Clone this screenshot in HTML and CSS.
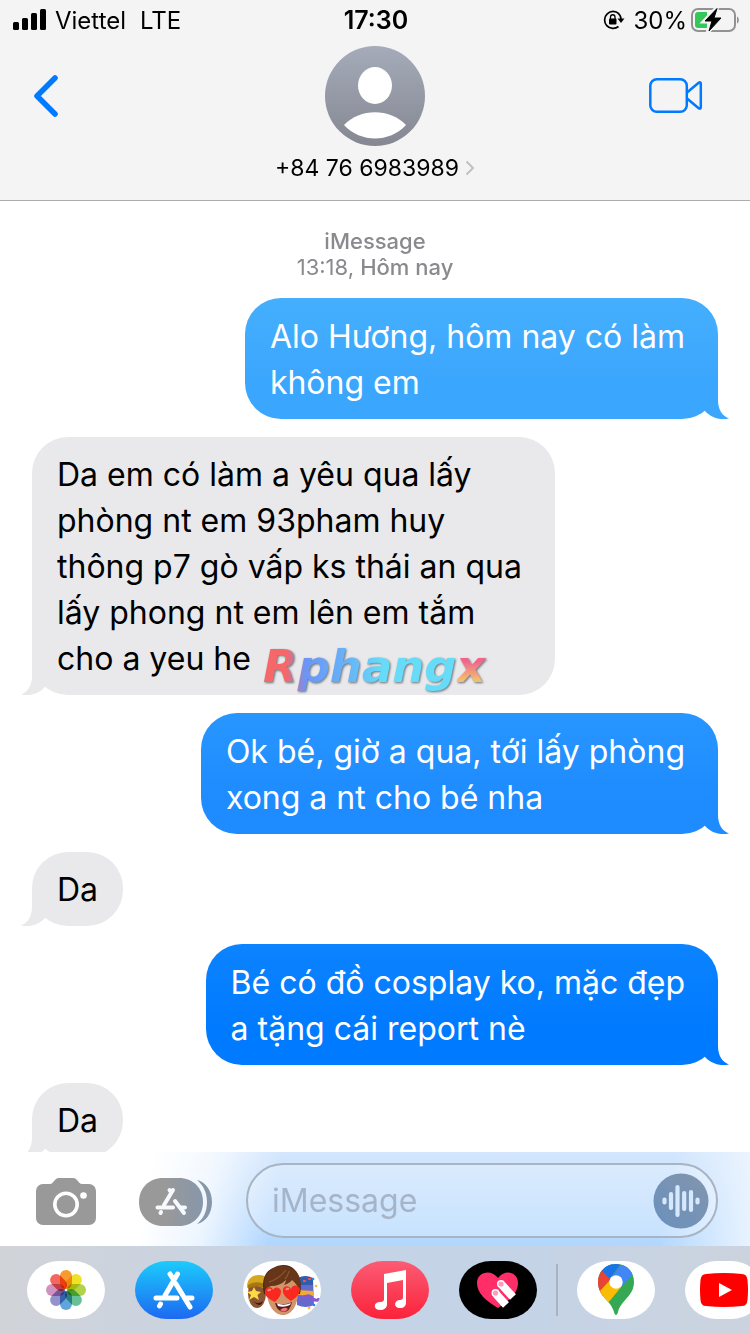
FILE: index.html
```html
<!DOCTYPE html>
<html lang="vi">
<head>
    <meta charset="UTF-8">
    <meta name="viewport" content="width=device-width, initial-scale=1.0">
    <title>iMessage</title>
    <link rel="stylesheet" href="styles.css">
</head>
<body>

<svg class="defs" width="0" height="0" aria-hidden="true">
    <symbol id="tail-right" viewBox="0 0 30 36">
        <path d="M18 0V17C18 26 22 33 29 35.500C20 37.500 11 34.500 5 28L0 16Z"/>
    </symbol>
    <symbol id="tail-left" viewBox="0 0 30 36">
        <path d="M12 0V17C12 26 8 33 1 35.500C10 37.500 19 34.500 25 28L30 16Z"/>
    </symbol>
</svg>

<header class="header">
    <div class="status-bar">
        <div class="status-left">
            <svg width="34" height="22" viewBox="0 0 34 22">
                <rect x="0" y="13" width="6" height="8" rx="1.500"/>
                <rect x="9" y="9" width="6" height="12" rx="1.500"/>
                <rect x="18" y="4" width="6" height="17" rx="1.500"/>
                <rect x="27" y="0" width="6" height="21" rx="1.500"/>
            </svg>
            <span>Viettel</span>
            <span class="network">LTE</span>
        </div>
        <div class="clock">17:30</div>
        <div class="status-right">
            <svg width="22" height="20" viewBox="0 0 22 20">
                <path d="M16 3.800A8.500 8.500 0 1 0 15.500 16.500M14.800 2.800A8.500 8.500 0 0 1 18 9" fill="none" stroke="#000" stroke-width="1.700"/>
                <path d="M14.500 8.500H21.500L18 13Z"/>
                <rect x="6" y="8.500" width="7.500" height="6" rx="1"/>
                <path d="M7.500 9V7A2.200 2.200 0 0 1 12 7V9" fill="none" stroke="#000" stroke-width="1.300"/>
            </svg>
            <span class="percent">30%</span>
            <svg width="50" height="26" viewBox="0 0 50 26">
                <rect x="3" y="2" width="43" height="22" rx="6" fill="none" stroke="#929292" stroke-width="2"/>
                <path d="M48 9.500C50.500 10.500 50.500 15.500 48 16.500Z" fill="#929292"/>
                <path d="M9 5H18V21H9A3 3 0 0 1 6 18V8A3 3 0 0 1 9 5Z" fill="#34c759"/>
                <path d="M28 0.500L15 14.500H22L19 24.500L33 11H25.500Z" stroke="#f4f4f4" stroke-width="4"/>
                <path d="M28 1.500L16 14H23L20 24L32 11H25Z" stroke="#000" stroke-width="1" stroke-linejoin="round"/>
            </svg>
        </div>
    </div>
    <div class="nav">
        <button class="nav-btn" type="button" aria-label="Back">
            <svg width="28" height="44" viewBox="0 0 28 44">
                <path d="M23 4L5 22L23 40" fill="none" stroke="#007aff" stroke-width="5.500" stroke-linecap="round" stroke-linejoin="round"/>
            </svg>
        </button>
        <button class="contact" type="button">
            <svg width="100" height="100" viewBox="0 0 100 100">
                <defs>
                    <linearGradient id="avatar" x1="0" y1="0" x2="0" y2="1">
                        <stop offset="0" stop-color="#a5abb9"/>
                        <stop offset="1" stop-color="#858892"/>
                    </linearGradient>
                </defs>
                <circle cx="50" cy="50" r="50" fill="url(#avatar)"/>
                <ellipse cx="50" cy="39.500" rx="17" ry="18.500" fill="#fff"/>
                <path d="M19 79C35 62 65 62 81 79C64 97 36 97 19 79Z" fill="#fff"/>
            </svg>
            <span class="contact-name">+84 76 6983989
                <svg width="10" height="16" viewBox="0 0 10 16">
                    <path d="M1.500 1.500L8 8L1.500 14.500" fill="none" stroke="#c0c0c3" stroke-width="2"/>
                </svg>
            </span>
        </button>
        <button class="nav-btn nav-video" type="button" aria-label="FaceTime">
            <svg width="54" height="36" viewBox="0 0 54 36">
                <g fill="none" stroke="#007aff" stroke-width="2.500" stroke-linejoin="round">
                    <rect x="1.300" y="1.300" width="36.500" height="32.500" rx="6.500"/>
                    <path d="M38 14.500L50 4.500Q51.800 3.500 51.800 6V29Q51.800 31.500 50 30.500L38 20.500"/>
                </g>
            </svg>
        </button>
    </div>
</header>

<main class="messages">
    <p class="date"><b>iMessage</b><br>13:18, <b>Hôm nay</b></p>

    <div class="bubble sent long sent-1">Alo Hương, hôm nay có làm<br>không em
        <svg class="tail"><use href="#tail-right"/></svg>
    </div>
    <div class="bubble received long">Da em có làm a yêu qua lấy<br>phòng nt em 93pham huy<br>thông p7 gò vấp ks thái an qua<br>lấy phong nt em lên em tắm<br>cho a yeu he
        <span class="watermark"><span class="watermark-main">Rphang</span><span class="watermark-x">x</span></span>
        <svg class="tail"><use href="#tail-left"/></svg>
    </div>
    <div class="bubble sent long sent-2">Ok bé, giờ a qua, tới lấy phòng<br>xong a nt cho bé nha
        <svg class="tail"><use href="#tail-right"/></svg>
    </div>
    <div class="bubble received">Da
        <svg class="tail"><use href="#tail-left"/></svg>
    </div>
    <div class="bubble sent long sent-3">Bé có đồ cosplay ko, mặc đẹp<br>a tặng cái report nè
        <svg class="tail"><use href="#tail-right"/></svg>
    </div>
    <div class="bubble received">Da
        <svg class="tail"><use href="#tail-left"/></svg>
    </div>
</main>

<form class="composer">
    <button class="icon-btn" type="button" aria-label="Camera">
        <svg width="60" height="48" viewBox="0 0 60 48">
            <path d="M7 6H14C18 6 18 0 23 0H37C42 0 42 6 46 6H53A7 7 0 0 1 60 13V40A7 7 0 0 1 53 47H7A7 7 0 0 1 0 40V13A7 7 0 0 1 7 6Z" fill="#999"/>
            <circle cx="30" cy="26.500" r="11.200" fill="none" stroke="#fff" stroke-width="3.600"/>
            <circle cx="47.500" cy="17.500" r="3.300" fill="#fff"/>
        </svg>
    </button>
    <button class="icon-btn icon-apps" type="button" aria-label="Apps">
        <svg width="74" height="48" viewBox="0 0 74 48">
            <defs>
                <linearGradient id="drawer" x1="0" y1="0" x2="1" y2="0">
                    <stop offset="0.400" stop-color="#999"/>
                    <stop offset="1" stop-color="#8797aa"/>
                </linearGradient>
            </defs>
            <path d="M58 2C67 4 73 13 73 24S67 44 58 46C64 41 68 34 68 24S64 7 58 2Z" fill="#8797aa"/>
            <path d="M24 0H40C54 0 64 10 64 24S54 48 40 48H24C10 48 0 38 0 24S10 0 24 0Z" fill="url(#drawer)"/>
            <g stroke="#f6f9fe" stroke-width="4" stroke-linecap="round">
                <path d="M34 12L25 27M30.500 12L32 14M36 23L45 35M18.500 29.500H34M41.500 29.500H46M22 34L21.500 35"/>
            </g>
        </svg>
    </button>
    <div class="field">
        <input type="text" placeholder="iMessage" aria-label="iMessage">
        <button class="voice" type="button" aria-label="Audio message">
            <svg width="56" height="56" viewBox="0 0 56 56">
                <defs>
                    <linearGradient id="voice" x1="1" y1="0" x2="0" y2="1">
                        <stop offset="0" stop-color="#8395ad"/>
                        <stop offset="1" stop-color="#6a90bd"/>
                    </linearGradient>
                </defs>
                <circle cx="28" cy="28" r="27.500" fill="url(#voice)"/>
                <path d="M11.500 26.500V29.500M18 21V35M24.500 14V42M31.200 20V36M38 19V37M44.500 26.500V29.500" stroke="#d6e8fd" stroke-width="4.200" stroke-linecap="round"/>
            </svg>
        </button>
    </div>
</form>

<nav class="apps">
    <button class="app" type="button" aria-label="Photos">
        <svg width="42" height="42" viewBox="-21 -21 42 42">
            <g class="petals">
                <rect x="-6" y="-20" width="12" height="19" rx="6" fill="#f89b2e"/>
                <rect x="-6" y="-20" width="12" height="19" rx="6" fill="#f0e126" transform="rotate(45)"/>
                <rect x="-6" y="-20" width="12" height="19" rx="6" fill="#b1d34b" transform="rotate(90)"/>
                <rect x="-6" y="-20" width="12" height="19" rx="6" fill="#68c196" transform="rotate(135)"/>
                <rect x="-6" y="-20" width="12" height="19" rx="6" fill="#60a5dc" transform="rotate(180)"/>
                <rect x="-6" y="-20" width="12" height="19" rx="6" fill="#9392cb" transform="rotate(225)"/>
                <rect x="-6" y="-20" width="12" height="19" rx="6" fill="#cf93bf" transform="rotate(270)"/>
                <rect x="-6" y="-20" width="12" height="19" rx="6" fill="#f2685f" transform="rotate(315)"/>
            </g>
        </svg>
    </button>
    <button class="app app-store" type="button" aria-label="App Store">
        <svg width="44" height="40" viewBox="0 0 44 40">
            <path d="M25.500 4L13 25.500M18 4L20.500 8M24 14L38 37M4 28H25M35 28H40M8.500 34L7.500 36" stroke="#fff" stroke-width="5" stroke-linecap="round"/>
        </svg>
    </button>
    <button class="app" type="button" aria-label="Memoji">
        <svg width="78" height="58" viewBox="0 0 78 58">
            <ellipse cx="14" cy="33" rx="9" ry="14" fill="#8a5533"/>
            <path d="M4 26C4 16 12 12 22 15V28Q12 22 4 27Z" fill="#d6a720"/>
            <path d="M5 24Q13 19 22 23V27Q12 23 5 28Z" fill="#a9780e"/>
            <path d="M11 26L13 30L18 31L14.500 34L16 39L11 36L6 39L8 34L4 31L9 30Z" fill="#ffda43"/>
            <path d="M10 40Q15 44 20 40Q17 48 10 40Z" fill="#45170f"/>
            <path d="M54 18Q62 13 70 18L71 44Q63 48 54 44Z" fill="#6568cf"/>
            <path d="M55 17Q62 13 70 17V24H55Z" fill="#315daa"/>
            <path d="M55 29L71 30V35L55 34Z" fill="#f0ad31"/>
            <path d="M59 37Q67 32 69 38Q76 41 76 37" fill="none" stroke="#8659cc" stroke-width="3"/>
            <path d="M65 18H68M60 20H63" stroke="#f04c59" stroke-width="2"/>
            <g fill="#2584f5"><circle cx="70" cy="18" r="1.300"/><circle cx="71" cy="44" r="1.300"/></g>
            <g fill="#f4bd32"><circle cx="73" cy="25" r="1.300"/><circle cx="66" cy="47" r="1.300"/></g>
            <path d="M21 33C18 20 22 10 30 7C37 3 46 3 51 8C57 13 59 24 57 33Z" fill="#4d2612"/>
            <path d="M24 30C24 20 30 15 40 15S55 20 55 30C55 44 49 54 40 54S24 44 24 30Z" fill="#d2946a"/>
            <path d="M22 30C19 17 25 9 33 6C43 3 52 7 56 15C58 20 58 26 56 29Q54 23 49 19Q47 22 41 24Q43 21 43 19Q37 25 28 25Q24 26 22 30Z" fill="#673619"/>
            <path d="M26 21Q36 18 43 9M42 18Q45 15 46 10" fill="none" stroke="#8f5530" stroke-width="1.200"/>
            <path d="M32 42Q41 45 49 41Q47 51 40 51Q34 50 32 42Z" fill="#5b1c17"/>
            <path d="M34 42.500Q41 45 48 42L47 44Q41 47 35 45Z" fill="#fff"/>
            <path d="M37 49Q42 45 45 48Q41 53 37 49Z" fill="#ef7777"/>
            <path d="M32 41C25 38 21 34 22 30C23 25 29 25 30 29C32 25 37 26 38 30C38 35 35 38 32 41Z" fill="#f92920"/>
            <path d="M48 40C43 37 39 33 40 28C42 24 46 25 48 28C50 23 55 24 57 28C57 33 53 37 48 40Z" fill="#f92920"/>
            <path d="M25 30Q26 28 28 29M43 29Q44 27 46 28" stroke="#ff877d" stroke-width="2" fill="none"/>
        </svg>
    </button>
    <button class="app app-music" type="button" aria-label="Music">
        <svg width="34" height="42" viewBox="0 0 34 42">
            <path d="M11 5L33 1V33C33 37 31 39 27 39C20 39 21 31 27 31C29 31 30 30 30 28V11L14 14V35C14 39 11 41 7 41C0 41 0 33 7 33C10 33 11 32 11 30Z" fill="#fff"/>
        </svg>
    </button>
    <button class="app app-touch" type="button" aria-label="Digital Touch">
        <svg width="42" height="38" viewBox="0 0 42 38">
            <path d="M21 37C9 30 0 22 0 12C0 0 15 -2 21 7C27 -2 41 0 41 12C41 22 32 30 21 37Z" fill="#ff2d68"/>
            <path d="M25 14L36 26M19 23L29 34" stroke="#fff" stroke-width="8"/>
            <circle cx="24" cy="13" r="4" fill="#fff"/>
            <circle cx="18.500" cy="22" r="4" fill="#fff"/>
            <circle cx="24" cy="13" r="2.600" fill="#ff9cb8"/>
            <circle cx="18.500" cy="22" r="2.600" fill="#ff9cb8"/>
        </svg>
    </button>
    <span class="divider"></span>
    <button class="app" type="button" aria-label="Google Maps">
        <svg width="38" height="52" viewBox="0 0 38 52">
            <defs>
                <clipPath id="pin"><path d="M19 0C8 0 1 8 1 18C1 33 14 36 17 48C18 52 20 52 21 48C24 36 37 32 37 18C37 8 30 0 19 0Z"/></clipPath>
            </defs>
            <g clip-path="url(#pin)">
                <rect width="38" height="52" fill="#34a853"/>
                <path d="M-2 8L6 6L19 18L0 39Z" fill="#ea4335"/>
                <path d="M5 7L14 -4H26L13 15Z" fill="#1a73e8"/>
                <path d="M25 0H38V8L25 22L13 14Z" fill="#4285f4"/>
                <path d="M2 28L14 15L25 22L11 39L-2 40Z" fill="#fbbc04"/>
            </g>
            <circle cx="19" cy="18" r="6.700" fill="#fff"/>
        </svg>
    </button>
    <button class="app" type="button" aria-label="YouTube">
        <svg width="48" height="34" viewBox="0 0 48 34">
            <path d="M6 1Q24 -1 42 1Q47 1 47.500 7Q48.500 17 47.500 27Q47 33 42 33Q24 35 6 33Q1 33 .5 27Q-.5 17 .5 7Q1 1 6 1Z" fill="#f00"/>
            <path d="M19 10V24L32 17Z" fill="#fff"/>
        </svg>
    </button>
</nav>

</body>
</html>
```
FILE: styles.css
```css
* {
    box-sizing: border-box;
}
body {
    font-family: Inter, "Noto Sans", sans-serif;
    background-color: #ffffff;
    color: #000000;
    margin: 0;
    height: 100vh;
    display: flex;
    flex-direction: column;
    overflow: hidden;
}
button, input {
    font-family: inherit;
    color: inherit;
    background: none;
    border: none;
    padding: 0;
    margin: 0;
}
button {
    cursor: pointer;
}
svg {
    display: block;
    flex-shrink: 0;
}
.defs {
    position: absolute;
}

/* Header */
.header {
    background-color: #f4f4f4;
    border-bottom: 1px solid #acacac;
    padding-bottom: 19px;
}
.status-bar {
    display: grid;
    grid-template-columns: 1fr auto 1fr;
    align-items: center;
    height: 40px;
    padding: 0 11px 0 13px;
    font-size: 24px;
}
.status-left, .status-right {
    display: flex;
    align-items: center;
    gap: 8px;
}
.status-right {
    justify-content: flex-end;
}
.network {
    margin-left: 6px;
}
.percent {
    margin-right: -6px;
}
.clock {
    font-size: 25px;
    font-weight: 600;
}
.nav {
    display: grid;
    grid-template-columns: 1fr auto 1fr;
    align-items: start;
    padding: 6px 47px 0 32px;
}
.nav-btn {
    height: 100px;
    display: flex;
    align-items: center;
}
.nav-video {
    justify-self: end;
}
.contact {
    display: flex;
    flex-direction: column;
    align-items: center;
    gap: 9px;
    padding-left: 15px;
}
.contact-name {
    display: flex;
    align-items: center;
    gap: 6px;
    font-size: 23px;
    line-height: 26px;
}

/* Conversation */
.messages {
    flex: 1;
    min-height: 0;
    overflow: hidden;
    display: flex;
    flex-direction: column;
    gap: 18px;
    padding: 27px 32px 0;
}
.date {
    margin: 0;
    text-align: center;
    font-size: 22px;
    line-height: 26px;
    color: #8a8a8e;
}
.date b {
    font-weight: 500;
}
.bubble {
    position: relative;
    flex-shrink: 0;
    border-radius: 36px;
    padding: 15px 25px 13px;
    font-size: 32px;
    line-height: 46px;
    white-space: nowrap;
}
.long {
    padding-right: 33px;
}
.sent {
    align-self: flex-end;
    padding-top: 16px;
    color: #ffffff;
}
.received {
    align-self: flex-start;
    background-color: #e9e9eb;
}
.sent-1 {
    background: linear-gradient(#45affd, #3ba6fd 70%);
}
.sent-2 {
    background: linear-gradient(#2896ff, #1e8bff 70%);
}
.sent-3 {
    background: linear-gradient(#0c83ff, #007aff 70%);
}
.tail {
    position: absolute;
    bottom: 0;
    width: 30px;
    height: 36px;
}
.sent .tail {
    right: -12px;
}
.received .tail {
    left: -12px;
    fill: #e9e9eb;
}
.sent-1 .tail {
    fill: #3ba6fd;
}
.sent-2 .tail {
    fill: #1e8bff;
}
.sent-3 .tail {
    fill: #007aff;
}
.watermark {
    position: absolute;
    left: 231px;
    bottom: 2px;
    font-family: "DejaVu Sans", sans-serif;
    font-size: 45px;
    line-height: 52px;
    font-weight: 700;
    font-style: italic;
    color: transparent;
    filter: drop-shadow(1px 1px 1px #66707a);
}
.watermark-main {
    background: linear-gradient(90deg, #f66769 12%, #6b95f6 22%, #67b4f7 44%, #66dcf8 62%);
    -webkit-background-clip: text;
    background-clip: text;
}
.watermark-x {
    background: linear-gradient(#f0658b 40%, #f3bd70 75%);
    -webkit-background-clip: text;
    background-clip: text;
}

/* Message box */
.composer {
    display: flex;
    align-items: center;
    height: 94px;
    padding: 3px 32px 0 36px;
    background:
        linear-gradient(100deg, #ffffff 20%, rgba(255, 255, 255, 0.75) 28%, rgba(255, 255, 255, 0) 37%, rgba(255, 255, 255, 0) 88%, rgba(255, 255, 255, 0.7)),
        linear-gradient(#d3e6fd, #b1d7ff);
}
.icon-btn {
    padding-top: 3px;
}
.icon-apps {
    margin-left: 43px;
}
.field {
    flex: 1;
    min-width: 0;
    display: flex;
    align-items: center;
    height: 75px;
    margin-left: 33px;
    padding: 0 7px 0 24px;
    border: 2px solid #a9b3c1;
    border-radius: 38px;
    background-color: rgba(255, 255, 255, 0.25);
}
.field input {
    flex: 1;
    min-width: 0;
    font-size: 32px;
    outline: none;
}
.field input::placeholder {
    color: #a6b4c7;
    opacity: 1;
}

/* App strip */
.apps {
    display: flex;
    align-items: center;
    gap: 30px;
    height: 88px;
    padding-left: 27px;
    overflow: hidden;
    background: linear-gradient(90deg, #d1d3d8, #c5d3e7 45%, #c5d3e7 70%, #ccd3de);
}
.app {
    flex-shrink: 0;
    display: flex;
    align-items: center;
    justify-content: center;
    width: 78px;
    height: 58px;
    border-radius: 32px / 29px;
    background-color: #ffffff;
    overflow: hidden;
}
.petals rect {
    mix-blend-mode: multiply;
}
.app-store {
    background: linear-gradient(#1dcbfc, #1c69f1);
}
.app-music {
    background: linear-gradient(#fb5c74, #fa233b);
}
.app-touch {
    background-color: #000000;
}
.divider {
    flex-shrink: 0;
    width: 2px;
    height: 52px;
    margin: 0 -11px;
    background-color: #a6b3c5;
}
```
